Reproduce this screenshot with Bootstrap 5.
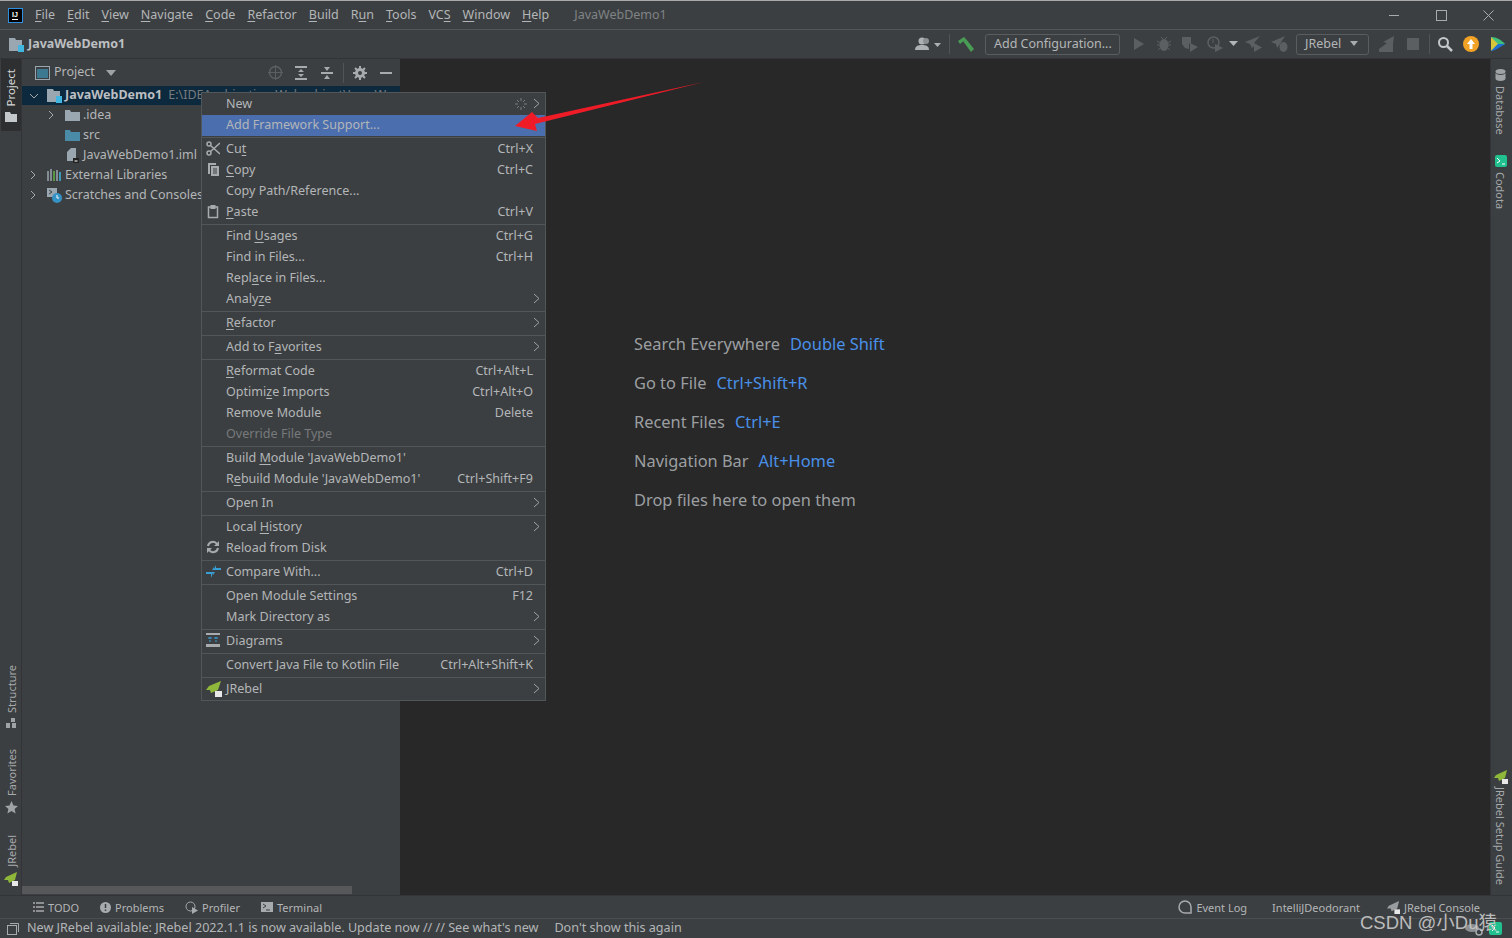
<!DOCTYPE html>
<html lang="en">
<head>
    <meta charset="UTF-8">
    <title>JavaWebDemo1</title>
    <link href="https://cdn.jsdelivr.net/npm/bootstrap@5.3.0/dist/css/bootstrap.min.css" rel="stylesheet">
    <style>
        html, body { height: 100%; overflow: hidden; }
        body {
            font-family: "Noto Sans", "Open Sans", sans-serif;
            font-size: 12.5px;
            line-height: 1;
            color: #b3b6b8;
            background-color: #3c3f41;
        }
        u { text-underline-offset: 2px; }
        svg { display: block; flex: none; }
        .gap6 { margin-left: 6px; } .gap7 { margin-left: 7px; } .gap8 { margin-left: 8px; } .gap9 { margin-left: 9px; }
        .gap10 { margin-left: 10px; } .gap11 { margin-left: 11px; } .gap12 { margin-left: 12px; } .gap13 { margin-left: 13px; }
        .ide { height: 938px; border-top: 1px solid #a9a9a9; position: relative; }
        .title-bar { height: 29px; border-bottom: 1px solid #53565a; }
        .logo {
            width: 15px; height: 15px; margin: 0 12px 0 8px; background: #000;
            border: 1px solid #2f8fe0; color: #fff; font: bold 7px/7px "Liberation Sans", sans-serif;
            padding: 2px 0 0 3px;
        }
        .logo-bar { width: 6px; height: 1px; background: #fff; margin-top: 1px; }
        .menu-bar { gap: 12px; }
        .window-title { color: #7f8386; margin-left: 25px; }
        .window-btns { margin-left: auto; margin-right: 18px; gap: 36px; }
        .nav-strip { height: 29px; border-bottom: 1px solid #323437; padding-left: 9px; }
        .crumb { font-weight: 700; color: #bcbfc1; margin-left: 2px; }
        .tool-group { margin-left: auto; padding-right: 7px; }
        .tool-btn {
            border: 1px solid #5a5d5f; border-radius: 3px; height: 21px; background: transparent;
            color: #b3b6b8; padding: 0 8px; font-size: 12.5px; text-align: left; white-space: nowrap;
        }
        .btn-config { width: 135px; }
        .btn-jrebel { width: 73px; }
        .tool-sep { width: 1px; height: 20px; background: #515456; }
        .main-area { height: 836px; }
        .stripe-left { width: 22px; border-right: 1px solid #323437; padding-left: 1px; }
        .stripe-right { width: 22px; border-left: 1px solid #323437; padding-right: 2px; }
        .stripe-tab { background: #2d2f30; height: 72px; margin-left: -1px; padding: 10px 0 0 1px; }
        .vert { writing-mode: vertical-rl; font-size: 11px; color: #a7aaac; white-space: nowrap; }
        .vert-up { transform: rotate(180deg); }
        .vert-on { color: #d5d7d8; font-size: 11.5px; }
        .stripe-tail { padding-bottom: 9px; }
        .after-text { margin-top: 5px; }
        .after-icon { margin-top: 21px; }
        .db-ico { margin-top: 10px; }
        .cd-ico { margin-top: 20px; }
        .setup-text { margin: 3px 0 10px; }
        .project-pane { width: 378px; position: relative; }
        .pane-head { height: 27px; padding-left: 13px; }
        .pane-tools { margin-left: auto; margin-right: 8px; }
        .tree-row { height: 20px; white-space: nowrap; overflow: hidden; }
        .lvl0 { padding-left: 7px; }
        .lvl1 { padding-left: 25px; }
        .slot { width: 18px; flex: none; }
        .tree-root { background: #0d293e; font-weight: 700; color: #bcbfc1; height: 19px; }
        .tree-path { font-weight: 400; color: #777a7c; margin-left: 6px; }
        .h-scroll { position: absolute; left: 0; bottom: 1px; width: 330px; height: 8px; background: #565859; }
        .editor { background: #282828; font-size: 16.4px; padding: 266px 0 0 234px; }
        .hint { height: 39px; display: flex; align-items: center; gap: 10px; color: #9c9fa1; }
        .hint span { color: #4a90e8; }
        .bottom-tools { height: 23px; border-top: 1px solid #323437; font-size: 11px; padding-left: 33px; }
        .tool-name { margin-left: 4px; margin-right: 21px; }
        .tool-end { margin-right: 32px; }
        .status-bar { height: 20px; border-top: 1px solid #4b4e50; padding-left: 7px; white-space: nowrap; font-size: 12.6px; }
        .status-icons { margin-left: auto; margin-right: 10px; gap: 6px; }
        .ctx-menu {
            position: absolute; left: 201px; top: 91px; width: 345px; display: block; min-width: 0;
            margin: 0; padding: 1px 0 0; border: 1px solid #515658; border-radius: 0;
            background: #3c3f41; font-size: 12.55px; color: #b3b6b8;
        }
        .ctx-row {
            height: 21px; display: flex; align-items: center; position: relative;
            padding: 0 12px 0 24px; color: #b3b6b8; white-space: nowrap;
        }
        .ctx-row.active { background: #4b6eaf; }
        .ctx-row.off { color: #777a7c; }
        .keys { margin-left: auto; }
        .chev { position: absolute; right: 5px; top: 4px; }
        .ctx-ico { position: absolute; left: 4px; top: 2px; }
        .spin-ico { left: 312px; top: 3px; }
        .ctx-line { height: 3px; margin: 0; opacity: 1; border: 0; background: linear-gradient(#3c3f41 1px, #515658 1px, #515658 2px, #3c3f41 2px); }
        .red-arrow { position: absolute; left: 500px; top: 69px; z-index: 1001; }
        .mark-text { position: absolute; left: 1360px; top: 907px; font: 18.5px "Liberation Sans", "Noto Sans CJK SC", sans-serif; color: #c9c9c9; opacity: .9; z-index: 1001; }
    </style>
</head>
<body>
<div class="ide">
    <div class="title-bar d-flex align-items-center">
        <div class="logo">IJ<div class="logo-bar"></div></div>
        <div class="menu-bar d-flex">
            <span><u>F</u>ile</span><span><u>E</u>dit</span><span><u>V</u>iew</span><span><u>N</u>avigate</span><span><u>C</u>ode</span><span><u>R</u>efactor</span><span><u>B</u>uild</span><span>R<u>u</u>n</span><span><u>T</u>ools</span><span>VC<u>S</u></span><span><u>W</u>indow</span><span><u>H</u>elp</span>
        </div>
        <span class="window-title">JavaWebDemo1</span>
        <div class="window-btns d-flex align-items-center">
            <svg width="11" height="11" viewBox="0 0 11 11"><path d="M0 5.500h10" stroke="#a8abad"/></svg>
            <svg width="11" height="11" viewBox="0 0 11 11"><rect x=".5" y=".5" width="10" height="10" fill="none" stroke="#a8abad"/></svg>
            <svg width="11" height="11" viewBox="0 0 11 11"><path d="M.5 .5l10 10M10.500 .5l-10 10" stroke="#a8abad"/></svg>
        </div>
    </div>

    <div class="nav-strip d-flex align-items-center">
        <svg width="17" height="17" viewBox="0 0 17 17"><path d="M0 2h6l1 2h6v11H0z" fill="#9aa7b0"/><rect x="9" y="9" width="6" height="7" fill="#40b6e0"/></svg>
        <span class="crumb">JavaWebDemo1</span>
        <div class="tool-group d-flex align-items-center">
            <svg width="26" height="14" viewBox="0 0 26 14"><circle cx="7" cy="4" r="3.500" fill="#aeb1b3"/><circle cx="11" cy="4" r="3" fill="#8d9092"/><path d="M0 13c0-4 3-5 7-5s7 1 7 5z" fill="#aeb1b3"/><path d="M19 6h7l-3.500 4z" fill="#aeb1b3"/></svg>
            <div class="tool-sep gap8"></div>
            <svg class="gap8" width="16" height="15" viewBox="0 0 16 15"><path d="M0 4l6-4 2 2-6 5z" fill="#499c54"/><path d="M5 4l3-2 8 10-3 3z" fill="#499c54"/></svg>
            <button class="tool-btn btn-config gap11" type="button">Add Configuration...</button>
            <svg class="gap13" width="12" height="14" viewBox="0 0 12 14"><path d="M1 1l10 6-10 6z" fill="#5c5f61"/></svg>
            <svg class="gap12" width="14" height="16" viewBox="0 0 14 16"><ellipse cx="7" cy="9" rx="4.500" ry="6" fill="#5c5f61"/><path d="M0 5l3 2M14 5l-3 2M0 9h3M14 9h-3M1 14l2-2M13 14l-2-2M4 1l2 2M10 1L8 3" stroke="#5c5f61"/></svg>
            <svg class="gap11" width="16" height="16" viewBox="0 0 16 16"><path d="M0 1h9v6L7 8v5L3 12 0 8z" fill="#5c5f61"/><path d="M8 7l8 4-8 5z" fill="#5c5f61"/></svg>
            <svg class="gap9" width="16" height="16" viewBox="0 0 16 16"><circle cx="6.500" cy="6.500" r="5.500" fill="none" stroke="#5c5f61" stroke-width="1.500"/><path d="M6 3v4" stroke="#5c5f61"/><path d="M8 8l8 4-8 4z" fill="#5c5f61"/></svg>
            <svg class="gap6" width="9" height="6" viewBox="0 0 9 6"><path d="M0 0h9L4.500 5z" fill="#b3b6b8"/></svg>
            <svg class="gap7" width="17" height="16" viewBox="0 0 17 16"><path d="M15 0L0 6l5 2 2 4 2-2V7z" fill="#5c5f61"/><path d="M9 7l8 4.500L9 16z" fill="#5c5f61"/></svg>
            <svg class="gap9" width="17" height="16" viewBox="0 0 17 16"><path d="M14 0L0 6l5 2 1 4 3-4z" fill="#5c5f61"/><ellipse cx="12.500" cy="11" rx="4" ry="5" fill="#5c5f61"/></svg>
            <button class="tool-btn btn-jrebel gap8 d-flex align-items-center gap-2" type="button">JRebel <svg width="10" height="6" viewBox="0 0 10 6"><path d="M1 0h8L5 5z" fill="#a8abad"/></svg></button>
            <svg class="gap9" width="17" height="16" viewBox="0 0 17 16"><path d="M16 0L5 6 9 7 1 13v3h14V8z" fill="#5c5f61"/></svg>
            <svg class="gap12" width="12" height="12" viewBox="0 0 12 12"><rect width="12" height="12" fill="#5c5f61"/></svg>
            <div class="tool-sep gap10"></div>
            <svg class="gap7" width="16" height="16" viewBox="0 0 16 16"><circle cx="6.500" cy="6.500" r="4.500" fill="none" stroke="#c5c8ca" stroke-width="2"/><path d="M10 10l5 5" stroke="#c5c8ca" stroke-width="2.500"/></svg>
            <svg class="gap10" width="16" height="16" viewBox="0 0 16 16"><circle cx="8" cy="8" r="8" fill="#f2a225"/><path d="M8 3l4 5H9.500v5h-3V8H4z" fill="#fff"/></svg>
            <svg class="gap11" width="15" height="16" viewBox="0 0 15 16"><path d="M1 1l14 7-14 7z" fill="#2f9fe0"/><path d="M1 1c6 0 10 3 14 7L8 8z" fill="#3ec07a"/><path d="M1 1l7 7-7 7z" fill="#d8c63a"/><path d="M1 15c3 0 8-3 14-7L8 8z" fill="#1d6fd0"/></svg>
        </div>
    </div>

    <div class="main-area d-flex">
        <div class="stripe-left d-flex flex-column align-items-center">
            <div class="stripe-tab w-100 d-flex flex-column align-items-center">
                <span class="vert vert-up vert-on">Project</span>
                <svg class="after-text" width="12" height="10" viewBox="0 0 12 10"><path d="M0 0h5l1 2h6v8H0z" fill="#c5c8ca"/></svg>
            </div>
            <div class="mt-auto d-flex flex-column align-items-center stripe-tail">
                <span class="vert vert-up">Structure</span>
                <svg class="after-text" width="10" height="10" viewBox="0 0 10 10"><path d="M0 5h4v5H0zM6 5h4v5H6zM5 0h4v4H5z" fill="#a0a3a5"/></svg>
                <span class="vert vert-up after-icon">Favorites</span>
                <svg class="after-text" width="13" height="13" viewBox="0 0 13 13"><path d="M6.500 0l2 4.500 4.500.4-3.400 3 1 4.600-4.100-2.400L2.400 12.500l1-4.600L0 4.900l4.500-.4z" fill="#a0a3a5"/></svg>
                <span class="vert vert-up after-icon">JRebel</span>
                <svg class="after-text" width="14" height="14" viewBox="0 0 14 14"><path d="M13 0L2 5 0 8h4l1 3 6-3z" fill="#8fb83a"/><rect x="8" y="9" width="6" height="5" fill="#e8e8e8"/></svg>
            </div>
        </div>

        <div class="project-pane">
            <div class="pane-head d-flex align-items-center">
                <svg width="15" height="14" viewBox="0 0 15 14"><rect x=".5" y=".5" width="14" height="13" fill="#3c3f41" stroke="#9aa7b0"/><rect x="2" y="3" width="11" height="9" fill="#3d7a92"/></svg>
                <span class="ms-1">Project</span>
                <svg class="gap11" width="10" height="6" viewBox="0 0 10 6"><path d="M0 0h10L5 6z" fill="#a0a3a5"/></svg>
                <div class="pane-tools d-flex align-items-center">
                    <svg width="15" height="15" viewBox="0 0 15 15"><circle cx="7.500" cy="7.500" r="6" fill="none" stroke="#5c5f61" stroke-width="1.500"/><path d="M7.500 0v15M0 7.500h15" stroke="#5c5f61"/></svg>
                    <svg class="gap11" width="14" height="14" viewBox="0 0 14 14"><path d="M1 1h12M1 13h12" stroke="#a8abad" stroke-width="2"/><path d="M7 3l3 3H4zM7 11l3-3H4z" fill="#a8abad"/></svg>
                    <svg class="gap12" width="14" height="14" viewBox="0 0 14 14"><path d="M1 7h12" stroke="#a8abad" stroke-width="2"/><path d="M7 5L4 1h6zM7 9l3 4H4z" fill="#a8abad"/></svg>
                    <div class="tool-sep gap9"></div>
                    <svg class="gap9" width="14" height="14" viewBox="0 0 14 14"><circle cx="7" cy="7" r="3.500" fill="none" stroke="#a8abad" stroke-width="3"/><path d="M7 0v3M7 11v3M0 7h3M11 7h3M2 2l2 2M10 10l2 2M12 2l-2 2M4 10l-2 2" stroke="#a8abad" stroke-width="2"/></svg>
                    <svg class="gap13" width="12" height="12" viewBox="0 0 12 12"><path d="M0 6h12" stroke="#a8abad" stroke-width="2"/></svg>
                </div>
            </div>
            <div class="tree-row tree-root lvl0 d-flex align-items-center">
                <div class="slot"><svg width="10" height="6" viewBox="0 0 10 6"><path d="M1 1l4 4 4-4" fill="none" stroke="#a8abad"/></svg></div>
                <div class="slot"><svg width="17" height="15" viewBox="0 0 17 15"><path d="M0 1h6l1 2h6v11H0z" fill="#9aa7b0"/><rect x="9" y="8" width="6" height="7" fill="#40b6e0"/></svg></div>
                <span>JavaWebDemo1</span><span class="tree-path">E:\IDEA_objective_Web_object\Java W</span>
            </div>
            <div class="tree-row lvl1 d-flex align-items-center">
                <div class="slot"><svg width="10" height="10" viewBox="0 0 10 10"><path d="M2 1l4 4-4 4" fill="none" stroke="#a8abad"/></svg></div>
                <div class="slot"><svg width="15" height="11" viewBox="0 0 15 11"><path d="M0 0h5l1 2h9v9H0z" fill="#9aa7b0"/></svg></div><span>.idea</span>
            </div>
            <div class="tree-row lvl1 d-flex align-items-center">
                <div class="slot"></div>
                <div class="slot"><svg width="15" height="11" viewBox="0 0 15 11"><path d="M0 0h5l1 2h9v9H0z" fill="#4a8ba8"/></svg></div><span>src</span>
            </div>
            <div class="tree-row lvl1 d-flex align-items-center">
                <div class="slot"></div>
                <div class="slot"><svg width="15" height="15" viewBox="0 0 15 15"><path d="M6 0h5v13H2V4z" fill="#9aa7b0"/><rect x="8" y="10" width="6" height="5" fill="#222"/><path d="M9.500 13h3" stroke="#fff"/></svg></div><span>JavaWebDemo1.iml</span>
            </div>
            <div class="tree-row lvl0 d-flex align-items-center">
                <div class="slot"><svg width="10" height="10" viewBox="0 0 10 10"><path d="M2 1l4 4-4 4" fill="none" stroke="#a8abad"/></svg></div>
                <div class="slot"><svg width="15" height="13" viewBox="0 0 15 13"><path d="M1 2v10M4 0v12M10 1v11" stroke="#9aa7b0" stroke-width="1.500"/><path d="M7 2v10" stroke="#62b543" stroke-width="1.500"/><path d="M13 3v9" stroke="#40b6e0" stroke-width="1.500"/></svg></div>
                <span>External Libraries</span>
            </div>
            <div class="tree-row lvl0 d-flex align-items-center">
                <div class="slot"><svg width="10" height="10" viewBox="0 0 10 10"><path d="M2 1l4 4-4 4" fill="none" stroke="#a8abad"/></svg></div>
                <div class="slot"><svg width="15" height="15" viewBox="0 0 15 15"><rect width="10" height="9" fill="#9aa7b0"/><path d="M2 2l3 2-3 2" stroke="#3c3f41" fill="none"/><circle cx="10" cy="10" r="5" fill="#3592c4"/><path d="M10 7v3h2" stroke="#fff" fill="none"/></svg></div>
                <span>Scratches and Consoles</span>
            </div>
            <div class="h-scroll"></div>
        </div>

        <div class="editor flex-grow-1">
            <div class="hint">Search Everywhere <span>Double Shift</span></div>
            <div class="hint">Go to File <span>Ctrl+Shift+R</span></div>
            <div class="hint">Recent Files <span>Ctrl+E</span></div>
            <div class="hint">Navigation Bar <span>Alt+Home</span></div>
            <div class="hint">Drop files here to open them</div>
        </div>

        <div class="stripe-right d-flex flex-column align-items-center">
            <svg class="db-ico" width="11" height="12" viewBox="0 0 11 12"><ellipse cx="5.500" cy="2.500" rx="5" ry="2.500" fill="#a0a3a5"/><path d="M.5 4v6c1 2.500 9 2.500 10 0V4c-1 2.500-9 2.500-10 0z" fill="#a0a3a5"/></svg>
            <span class="vert after-text">Database</span>
            <svg class="cd-ico" width="12" height="12" viewBox="0 0 12 12"><rect width="12" height="12" rx="2" fill="#21c08f"/><path d="M2 3l3 3-3 2M7 9h3" stroke="#fff" fill="none"/></svg>
            <span class="vert after-text">Codota</span>
            <svg class="mt-auto" width="14" height="14" viewBox="0 0 14 14"><path d="M13 0L2 5 0 8h4l1 3 6-3z" fill="#8fb83a"/><rect x="8" y="9" width="6" height="5" fill="#e8e8e8"/></svg>
            <span class="vert setup-text">JRebel Setup Guide</span>
        </div>
    </div>

    <div class="bottom-tools d-flex align-items-center">
        <svg width="11" height="10" viewBox="0 0 11 10"><path d="M0 1h2M3 1h8M0 5h2M3 5h8M0 9h2M3 9h8" stroke="#a8abad" stroke-width="1.500"/></svg>
        <span class="tool-name">TODO</span>
        <svg width="11" height="11" viewBox="0 0 11 11"><circle cx="5.500" cy="5.500" r="5.500" fill="#a8abad"/><path d="M5.500 2v4M5.500 7.500v1.500" stroke="#3c3f41" stroke-width="1.500"/></svg>
        <span class="tool-name">Problems</span>
        <svg width="13" height="13" viewBox="0 0 13 13"><circle cx="5.500" cy="5.500" r="4.500" fill="none" stroke="#a8abad"/><path d="M7 6l6 3.500L7 13z" fill="#a8abad"/></svg>
        <span class="tool-name">Profiler</span>
        <svg width="12" height="10" viewBox="0 0 12 10"><rect width="12" height="10" fill="#a8abad"/><path d="M2 2l3 2-3 2M5 8h4" stroke="#3c3f41" fill="none"/></svg>
        <span class="tool-name">Terminal</span>
        <svg class="ms-auto" width="14" height="14" viewBox="0 0 14 14"><path d="M13 13H7a6 6 0 1 1 6-6z" fill="none" stroke="#a8abad" stroke-width="1.500"/></svg>
        <span class="tool-name">Event Log</span>
        <span class="tool-name">IntelliJDeodorant</span>
        <svg class="gap6" width="13" height="13" viewBox="0 0 14 14"><path d="M13 0L2 5 0 8h4l1 3 6-3z" fill="#9a9d9f"/><rect x="8" y="9" width="6" height="5" fill="#e8e8e8"/></svg>
        <span class="ms-1 tool-end">JRebel Console</span>
    </div>

    <div class="status-bar d-flex align-items-center">
        <svg class="me-2" width="12" height="12" viewBox="0 0 12 12"><rect x=".5" y="2.500" width="9" height="9" fill="none" stroke="#a8abad"/><path d="M3 .5h8.500V9" fill="none" stroke="#a8abad"/></svg>
        <span>New JRebel available: JRebel 2022.1.1 is now available. Update now // // See what's new</span>
        <span class="ms-3">Don't show this again</span>
        <div class="status-icons d-flex align-items-center">
            <svg width="18" height="14" viewBox="0 0 18 14"><ellipse cx="7" cy="6" rx="7" ry="4" fill="#8d9092"/><circle cx="14" cy="10" r="3" fill="none" stroke="#a8abad" stroke-width="1.500"/></svg>
            <svg width="13" height="13" viewBox="0 0 13 13"><rect width="13" height="13" rx="2" fill="#21c08f"/><path d="M3 3l3 3-3 3M7 10h3" stroke="#fff" fill="none"/></svg>
        </div>
    </div>

    <div class="ctx-menu dropdown-menu">
        <div class="ctx-row"><span>New</span>
            <svg class="ctx-ico spin-ico" width="14" height="14" viewBox="0 0 14 14"><path d="M7 1v3M7 10v3M1 7h3M10 7h3M3 3l2 2M9 9l2 2M11 3L9 5M5 9l-2 2" stroke="#7a7d7f"/></svg>
            <svg class="chev" width="7" height="11" viewBox="0 0 7 11"><path d="M1 1l5 4.500L1 10" fill="none" stroke="#a0a3a5"/></svg></div>
        <div class="ctx-row active"><span>Add Framework Support...</span></div>
        <hr class="ctx-line">
        <div class="ctx-row"><svg class="ctx-ico" width="14" height="15" viewBox="0 0 14 15"><circle cx="3" cy="3" r="2" fill="none" stroke="#a8abad" stroke-width="1.500"/><circle cx="3" cy="12" r="2" fill="none" stroke="#a8abad" stroke-width="1.500"/><path d="M4.500 4.500L14 13M4.500 10.500L14 2" stroke="#a8abad" stroke-width="1.500"/></svg><span>Cu<u>t</u></span><span class="keys">Ctrl+X</span></div>
        <div class="ctx-row"><svg class="ctx-ico" width="14" height="15" viewBox="0 0 14 15"><path d="M2 1h8v2H4v9H2z" fill="#a8abad"/><rect x="5" y="4" width="8" height="10" fill="#a8abad"/><path d="M7 7h4M7 9h4M7 11h4" stroke="#3c3f41"/></svg><span><u>C</u>opy</span><span class="keys">Ctrl+C</span></div>
        <div class="ctx-row"><span>Copy Path/Reference...</span></div>
        <div class="ctx-row"><svg class="ctx-ico" width="14" height="15" viewBox="0 0 14 15"><rect x="2.500" y="3" width="9" height="10.500" fill="none" stroke="#a8abad" stroke-width="1.500"/><rect x="4.500" y="1" width="5" height="4" fill="#a8abad"/></svg><span><u>P</u>aste</span><span class="keys">Ctrl+V</span></div>
        <hr class="ctx-line">
        <div class="ctx-row"><span>Find <u>U</u>sages</span><span class="keys">Ctrl+G</span></div>
        <div class="ctx-row"><span>Find in Files...</span><span class="keys">Ctrl+H</span></div>
        <div class="ctx-row"><span>Repl<u>a</u>ce in Files...</span></div>
        <div class="ctx-row"><span>Analy<u>z</u>e</span><svg class="chev" width="7" height="11" viewBox="0 0 7 11"><path d="M1 1l5 4.500L1 10" fill="none" stroke="#a0a3a5"/></svg></div>
        <hr class="ctx-line">
        <div class="ctx-row"><span><u>R</u>efactor</span><svg class="chev" width="7" height="11" viewBox="0 0 7 11"><path d="M1 1l5 4.500L1 10" fill="none" stroke="#a0a3a5"/></svg></div>
        <hr class="ctx-line">
        <div class="ctx-row"><span>Add to F<u>a</u>vorites</span><svg class="chev" width="7" height="11" viewBox="0 0 7 11"><path d="M1 1l5 4.500L1 10" fill="none" stroke="#a0a3a5"/></svg></div>
        <hr class="ctx-line">
        <div class="ctx-row"><span><u>R</u>eformat Code</span><span class="keys">Ctrl+Alt+L</span></div>
        <div class="ctx-row"><span>Optimi<u>z</u>e Imports</span><span class="keys">Ctrl+Alt+O</span></div>
        <div class="ctx-row"><span>Remove Module</span><span class="keys">Delete</span></div>
        <div class="ctx-row off"><span>Override File Type</span></div>
        <hr class="ctx-line">
        <div class="ctx-row"><span>Build <u>M</u>odule 'JavaWebDemo1'</span></div>
        <div class="ctx-row"><span>R<u>e</u>build Module 'JavaWebDemo1'</span><span class="keys">Ctrl+Shift+F9</span></div>
        <hr class="ctx-line">
        <div class="ctx-row"><span>Open In</span><svg class="chev" width="7" height="11" viewBox="0 0 7 11"><path d="M1 1l5 4.500L1 10" fill="none" stroke="#a0a3a5"/></svg></div>
        <hr class="ctx-line">
        <div class="ctx-row"><span>Local <u>H</u>istory</span><svg class="chev" width="7" height="11" viewBox="0 0 7 11"><path d="M1 1l5 4.500L1 10" fill="none" stroke="#a0a3a5"/></svg></div>
        <div class="ctx-row"><svg class="ctx-ico" width="14" height="14" viewBox="0 0 14 14"><path d="M2 6a5 5 0 0 1 9-2M12 8a5 5 0 0 1-9 2" fill="none" stroke="#a8abad" stroke-width="2"/><path d="M13 1v5H8zM1 13V8h5z" fill="#a8abad"/></svg><span>Reload from Disk</span></div>
        <hr class="ctx-line">
        <div class="ctx-row"><svg class="ctx-ico" width="15" height="15" viewBox="0 0 15 15"><path d="M10 1v3h5v2H8V5zM0 10V8h7v1l-2 5v-4z" fill="#389fd6"/><path d="M8 6V3l-2 3zM7 8v3l2-3z" fill="#389fd6"/></svg><span>Compare With...</span><span class="keys">Ctrl+D</span></div>
        <hr class="ctx-line">
        <div class="ctx-row"><span>Open Module Settings</span><span class="keys">F12</span></div>
        <div class="ctx-row"><span>Mark Directory as</span><svg class="chev" width="7" height="11" viewBox="0 0 7 11"><path d="M1 1l5 4.500L1 10" fill="none" stroke="#a0a3a5"/></svg></div>
        <hr class="ctx-line">
        <div class="ctx-row"><svg class="ctx-ico" width="14" height="14" viewBox="0 0 14 14"><path d="M0 0h14v2H0zM0 11h14v3H0z" fill="#a8abad"/><path d="M4 4v6M10 4v6" stroke="#389fd6" stroke-dasharray="2 1"/><path d="M2 5h4M8 5h4" stroke="#389fd6"/></svg><span>Diagrams</span><svg class="chev" width="7" height="11" viewBox="0 0 7 11"><path d="M1 1l5 4.500L1 10" fill="none" stroke="#a0a3a5"/></svg></div>
        <hr class="ctx-line">
        <div class="ctx-row"><span>Convert Java File to Kotlin File</span><span class="keys">Ctrl+Alt+Shift+K</span></div>
        <hr class="ctx-line">
        <div class="ctx-row"><svg class="ctx-ico" width="16" height="16" viewBox="0 0 16 16"><path d="M15 0L3 5 0 9h4l1 3 7-3z" fill="#8fb83a"/><rect x="9" y="10" width="7" height="6" fill="#e8e8e8"/></svg><span>JRebel</span><svg class="chev" width="7" height="11" viewBox="0 0 7 11"><path d="M1 1l5 4.500L1 10" fill="none" stroke="#a0a3a5"/></svg></div>
    </div>

    <svg class="red-arrow" width="220" height="70" viewBox="0 0 220 70"><path d="M204 12L38 48 32 42 15 56 37 61 35 54z" fill="#ef1c28"/></svg>
    <div class="mark-text">CSDN @小Du猿</div>
</div>
<script src="https://cdn.jsdelivr.net/npm/bootstrap@5.3.0/dist/js/bootstrap.bundle.min.js"></script>
</body>
</html>
